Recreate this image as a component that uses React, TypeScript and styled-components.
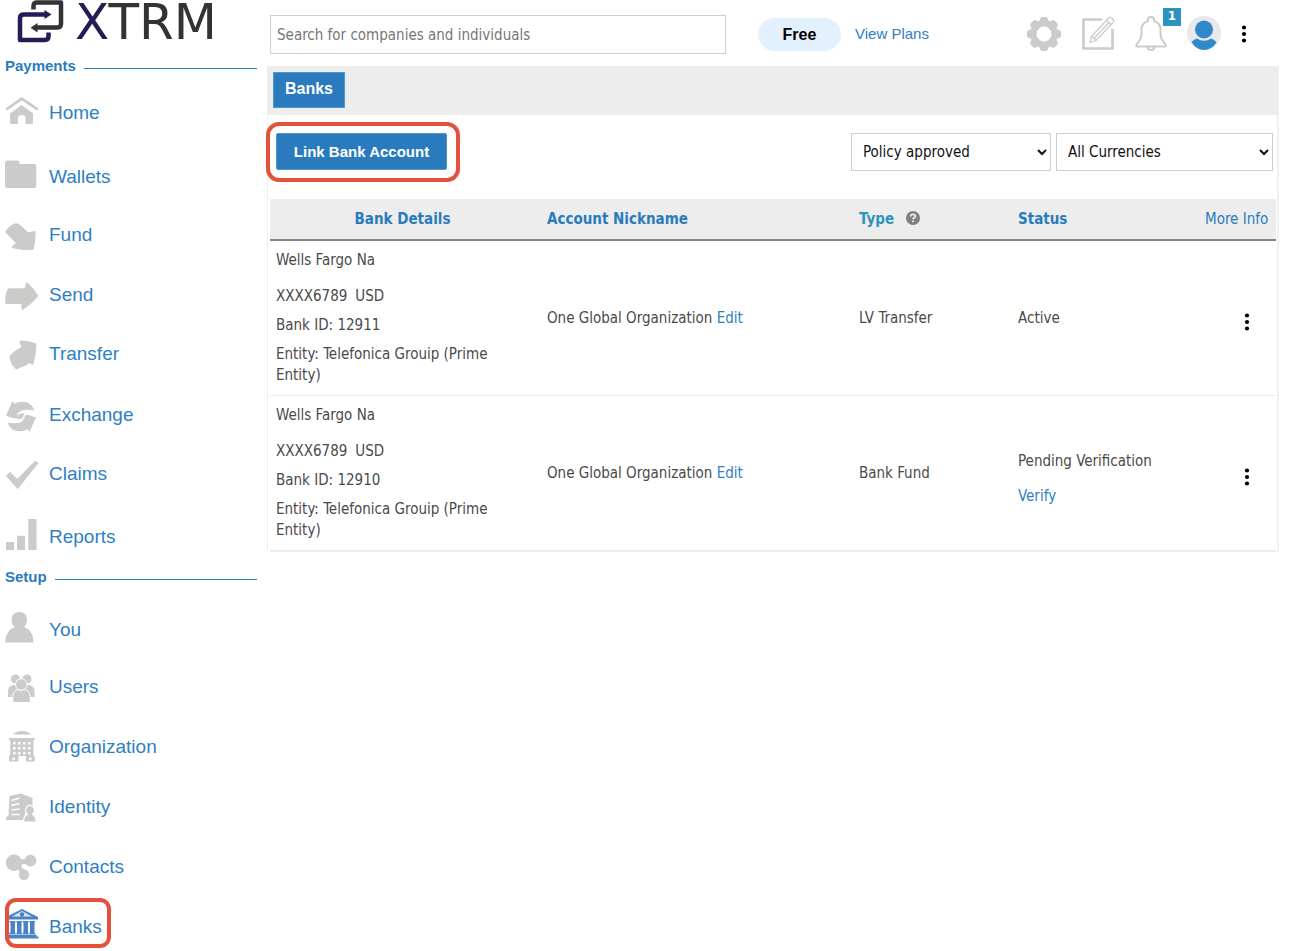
import React from "react";
import styled, { createGlobalStyle } from "styled-components";

const blue = "#2a7bbd";
const grey = "#cbcbca";
const sans = `"Liberation Sans", Arial, sans-serif`;
const humanist = `"DejaVu Sans Condensed", Tahoma, sans-serif`;

const GlobalStyle = createGlobalStyle`
  *, *::before, *::after { box-sizing: border-box; }
  body { margin: 0; background: #fff; color: #4a4a4a; font-family: ${humanist}; font-size: 15px; line-height: 21px; }
  a { color: #2f80c3; text-decoration: none; }
  button, input, select { font: inherit; }
`;

const Page = styled.div`
  display: grid;
  grid-template-columns: 257px minmax(0, 1fr);
  column-gap: 10px;
  padding-right: 12px;
`;

const Sidebar = styled.aside`
  font-family: ${sans};
`;

const Logo = styled.svg`
  display: block;
  width: 230px;
  height: 50px;
  overflow: visible;
`;

const SectionTitle = styled.h2<{ $before: number; $after: number }>`
  display: flex;
  align-items: center;
  gap: 8px;
  margin: ${(p) => p.$before}px 0 ${(p) => p.$after}px;
  padding-left: 5px;
  color: ${blue};
  font-size: 15px;
  line-height: 20px;

  &::after {
    content: "";
    flex: 1;
    height: 1px;
    margin-top: 4px;
    background: ${blue};
  }
`;

const NavList = styled.ul`
  margin: 0;
  padding: 0;
  list-style: none;
`;

const NavItem = styled.li<{ $gap: number; $marked?: boolean }>`
  position: relative;
  width: max-content;
  margin-bottom: ${(p) => p.$gap}px;

  ${(p) =>
    p.$marked &&
    `&::after {
      content: "";
      position: absolute;
      inset: -9px -9px -1px 5px;
      border: 4px solid #e5503c;
      border-radius: 11px;
      pointer-events: none;
    }`}
`;

const NavLink = styled.a`
  display: flex;
  align-items: center;
  gap: 9px;
  height: 40px;
  font-size: 19px;
  line-height: 22px;
`;

const NavIcon = styled.svg`
  width: 40px;
  height: 40px;
  fill: ${grey};
`;

const Main = styled.main`
  min-width: 0;
`;

const TopBar = styled.header`
  display: flex;
  align-items: center;
  height: 66px;
  padding: 0 31px 0 3px;
`;

const Search = styled.input`
  flex: 0 1 456px;
  min-width: 0;
  height: 39px;
  margin: 3px 32px 0 0;
  padding: 0 6px;
  border: 1px solid #cfcfcf;
  color: #555;

  &::placeholder { color: #777; opacity: 1; }
`;

const Plan = styled.span`
  width: 83px;
  margin: 2px 14px 0 0;
  border-radius: 17px;
  background: #e3f0fe;
  color: #000;
  font: bold 16px/33px ${sans};
  text-align: center;
`;

const PlansLink = styled.a`
  margin-top: 2px;
  font: 15px/20px ${sans};
  white-space: nowrap;
`;

const Actions = styled.div`
  display: flex;
  align-items: center;
  gap: 18px;
  margin: 2px 0 0 auto;
`;

const IconButton = styled.button`
  position: relative;
  display: block;
  padding: 0;
  border: 0;
  background: none;
  cursor: pointer;

  svg { display: block; }
`;

const Badge = styled.span`
  position: absolute;
  top: -8px;
  right: -13px;
  width: 18px;
  height: 18px;
  background: #2b95bf;
  color: #fff;
  font: bold 12px/17px "DejaVu Sans", sans-serif;
  text-align: center;
`;

const TabBar = styled.nav`
  display: flex;
  height: 49px;
  padding: 6px;
  background: #ededed;
`;

const Tab = styled.a`
  width: 72px;
  height: 36px;
  border: 1px solid #4f97cf;
  background: ${blue};
  color: #fff;
  font: bold 16px/31px ${sans};
  text-align: center;
`;

const Panel = styled.section`
  padding: 7px 1px 0 2px;
  border: solid #f0f0f0;
  border-width: 0 2px 0 1px;
`;

const Toolbar = styled.div`
  display: flex;
  align-items: center;
  gap: 5px;
  height: 60px;
  margin-bottom: 17px;
  padding-right: 3px;
`;

const Highlight = styled.div`
  margin: 0 auto 0 -4px;
  padding: 7px 9px 8px 6px;
  border: 4px solid #e5503c;
  border-radius: 13px;
`;

const PrimaryButton = styled.button`
  display: block;
  width: 171px;
  height: 37px;
  padding: 0;
  border: 1px solid #4f97cf;
  border-radius: 2px;
  background: ${blue};
  color: #fff;
  font: bold 15px/35px ${sans};
  cursor: pointer;
`;

const Filter = styled.select<{ $width: number }>`
  flex: 0 1 ${(p) => p.$width}px;
  min-width: 0;
  height: 38px;
  padding: 0 4px 0 7px;
  border: 1px solid #cfcfcf;
  border-radius: 0;
  background: #fff;
  color: #111;
`;

const Table = styled.table`
  width: 100%;
  border-collapse: collapse;
  table-layout: fixed;
  text-align: left;
`;

const Column = styled.col<{ $width?: number }>`
  ${(p) => p.$width && `width: ${p.$width}px;`}
`;

const HeadCell = styled.th<{ $center?: boolean; $light?: boolean; $teal?: boolean }>`
  height: 41px;
  padding: 0 12px 0 6px;
  border-bottom: 2px solid #858585;
  background: #ededed;
  color: ${(p) => (p.$teal ? "#2b95bf" : blue)};
  font-weight: ${(p) => (p.$light ? 400 : 700)};
  text-align: ${(p) => (p.$center ? "center" : "left")};
  white-space: nowrap;
  ${(p) => p.$light && "padding-right: 0;"}
`;

const HelpButton = styled(IconButton)`
  display: inline-block;
  margin-left: 12px;
  vertical-align: -1px;
`;

const Row = styled.tr`
  border-bottom: 1px solid #ececec;
  &:last-child { border-bottom-width: 2px; }
`;

const Cell = styled.td`
  padding: 9px 12px 9px 6px;
  vertical-align: middle;
`;

const Details = styled.div`
  display: grid;
  row-gap: 8px;
`;

const BankName = styled.div`
  margin-bottom: 7px;
`;

const Account = styled.div`
  display: flex;
  gap: 8px;
`;

const StatusStack = styled.div`
  display: grid;
  row-gap: 14px;
  padding-top: 12px;
`;

const RowMenu = styled(IconButton)`
  margin: 8px 0 0 38px;
`;

const Kebab = () => (
  <svg width="8" height="20" viewBox="0 0 8 20" fill="#000" aria-hidden="true">
    <circle cx="4" cy="3.500" r="2.100" />
    <circle cx="4" cy="10" r="2.100" />
    <circle cx="4" cy="16.500" r="2.100" />
  </svg>
);

const round = { stroke: grey, strokeWidth: 2.4, strokeLinejoin: "round" as const };

const turnArrow = "M12.500 6 6 20.500C10 22.500 15 24 20 23.500L17.500 19C21 14 29 14.500 34 15.500 33 7 21 4.500 14.500 9Z";

const icons: Record<string, React.ReactNode> = {
  Home: (
    <>
      <path d="M7 15.800 21.700 5.600 36.800 15.800" fill="none" stroke={grey} strokeWidth="2.800" strokeLinecap="round" />
      <path d="M21.700 12 33 20.500V29.500Q33 31 31.500 31H25.500V25Q25.500 22 21.800 22T18 25V31H11.500Q10 31 10 29.500V20.500Z" />
    </>
  ),
  Wallets: <path d="M7 3.500H17.500Q19.500 3.500 19.500 5.500V7H34Q36.300 7 36.300 9V29Q36.300 31 34 31H7Q5 31 5 29V5.500Q5 3.500 7 3.500Z" />,
  Fund: <path {...round} d="M6.500 16.700Q10 11.500 16 9.500 18 9.500 19.500 11L28 18.800Q31 18.500 34.400 17.200 34.500 26 32.500 33.800 22 34 13 32L17.500 28.500Z" />,
  Send: <path {...round} d="M9 14.500 25.500 14.200 27 8.800Q33 14 37 21 30 29 22.800 33.600L22.500 27.800H6.300Q6.500 17 9 14.500Z" />,
  Transfer: <path {...round} d="M10.700 22.500Q15 17.500 23 13.500L20.500 7.800Q29 8 35.300 10.300 35 20 32.400 29.500L30 27.500Q23.500 32 16.500 34 11.500 29.500 10.700 22.500Z" />,
  Exchange: (
    <>
      <path d={turnArrow} />
      <path transform="rotate(180 21 21.500)" d={turnArrow} />
      <path d="M18.500 18.500Q22 17.500 26 19L23.500 24.500Q20 25.500 16 24L18.500 24Z" fill={grey} />
      <path d="M17.500 19Q21 16.500 26 17.500L24 21.500Q23.500 24.500 17 25.500" fill="none" stroke="#fff" strokeWidth="1.500" />
    </>
  ),
  Claims: <path d="M6 22 10 17.700 17.300 25 35 6.700 38.700 8.700 17.700 35Z" />,
  Reports: <path d="M6 25H14V33H6ZM17 18.700H25V33H17ZM28.300 2H36.500V33H28.300Z" />,
  You: <path d="M19.300 2C25 2 27.300 6 27 10.500 26.800 13.500 25.500 15.500 24 17 30.500 19 33.500 25 33.500 32.500H5.300C5.300 25 8.500 19 15 17 12.800 15.500 11.700 13 11.600 10.500 11.500 6 14 2 19.300 2Z" />,
  Users: (
    <g stroke="#fff" strokeWidth="1">
      <circle cx="15.500" cy="12" r="5" />
      <circle cx="27" cy="12" r="5" />
      <path d="M7.500 30.500V24Q8 18 14 17.500H28.500Q34.500 18 35 24V30.500Z" />
      <circle cx="21.300" cy="17.500" r="5.800" />
      <path d="M12.800 35.500V29.500Q13.500 23 18 22.500 21 24.500 24.500 22.500 29.500 23 30.200 29.500V35.500Z" />
    </g>
  ),
  Organization: (
    <>
      <path d="M16 5.500Q17 4 22 4T28 5.500Q31 6 30.500 7.500H13.500Q13 6 16 5.500ZM9 11H34.700V13H33.500V28.500H34.700V34.500H26V29H18.500V34.500H9V28.500H10.200V13H9Z" />
      <path fill="#fff" d="M13 15H15.500V17.500H13ZM18 15H20.500V17.500H18ZM23 15H25.500V17.500H23ZM28 15H30.500V17.500H28ZM13 20H15.500V22.500H13ZM18 20H20.500V22.500H18ZM23 20H25.500V22.500H23ZM28 20H30.500V22.500H28ZM13 25H15.500V27.500H13ZM18 25H20.500V27.500H18ZM23 25H25.500V27.500H23ZM28 25H30.500V27.500H28ZM12.500 30.500H15V33H12.500ZM29 30.500H31.500V33H29Z" />
    </>
  ),
  Identity: (
    <>
      <path d="M9.500 9 20.500 6.500 32.500 11V20H27L24 30 22.500 33H6V30.500L8.500 28.500Z" />
      <path d="M11.500 13.500 19.500 11M11.500 18.500 19.500 16.500M11.500 23 19.500 22M11.500 27.500H19.500" stroke="#fff" strokeWidth="1.500" />
      <path stroke="#fff" strokeWidth="1.200" d="M23.500 35Q23.500 29 27.500 27.500 25 25 25.500 22.500 26.500 18.300 30 18.300T34.500 22.500Q35 25 32.500 27.500 36.200 29 36.200 35Z" />
    </>
  ),
  Contacts: (
    <>
      <circle cx="14" cy="15.700" r="8.200" />
      <circle cx="30.500" cy="13.700" r="5.900" />
      <circle cx="24" cy="27.700" r="5.200" />
      <path d="M18 12 29 12.500 30 16.500 20 17.500ZM16 19 19 17 25 24 21 27Z" />
    </>
  ),
  Banks: (
    <g fill="#4a82c6">
      <path d="M22 2 38 10V12.500H6V10Z" />
      <path fill="#dce8f5" d="M22 4 32 9.500H12Z" />
      <circle cx="22" cy="7.500" r="2.300" />
      <path d="M9.500 14H15.500V15.500H15V25.500H15.500V27H9.500V25.500H10.500V15.500H9.500ZM16.500 14H22V15.500H21.500V25.500H22V27H16.500V25.500H17V15.500H16.500ZM23 14H28.500V15.500H28V25.500H28.500V27H23V25.500H23.500V15.500H23ZM29.500 14H35V15.500H34.500V25.500H35V27H29.500V25.500H30V15.500H29.500ZM8.500 27.500H36.500V29.500H38.500V31.500H6V29.500H8.500Z" />
    </g>
  ),
};

type Entry = { label: string; gap: number; marked?: boolean };

const payments: Entry[] = [
  { label: "Home", gap: 24 },
  { label: "Wallets", gap: 18 },
  { label: "Fund", gap: 20 },
  { label: "Send", gap: 19 },
  { label: "Transfer", gap: 21 },
  { label: "Exchange", gap: 19 },
  { label: "Claims", gap: 23 },
  { label: "Reports", gap: 0 },
];

const setup: Entry[] = [
  { label: "You", gap: 17 },
  { label: "Users", gap: 20 },
  { label: "Organization", gap: 20 },
  { label: "Identity", gap: 20 },
  { label: "Contacts", gap: 20 },
  { label: "Banks", gap: 2, marked: true },
];

const Nav = ({ entries }: { entries: Entry[] }) => (
  <NavList>
    {entries.map(({ label, gap, marked }) => (
      <NavItem key={label} $gap={gap} $marked={marked}>
        <NavLink href="#">
          <NavIcon viewBox="0 0 40 40" aria-hidden="true">{icons[label]}</NavIcon>
          {label}
        </NavLink>
      </NavItem>
    ))}
  </NavList>
);

const banks = [
  { id: "12911", type: "LV Transfer", status: "Active", verify: false },
  { id: "12910", type: "Bank Fund", status: "Pending Verification", verify: true },
];

const gearTeeth = [0, 45, 90, 135, 180, 225, 270, 315];

export default function App() {
  return (
    <>
      <GlobalStyle />
      <Page>
        <Sidebar>
          <Logo viewBox="0 0 230 50" role="img" aria-label="XTRM">
            <g fill="none" strokeWidth="4.500" strokeLinejoin="round">
              <path d="M33.500 9.500V6Q33.500 2.500 37 2.500H61V23.500Q61 27.500 57.500 27.500H36" stroke="#333336" />
              <path d="M46 14.500H24Q20 14.500 20 18V40H45Q48.500 40 48.500 36V32.500" stroke="#251b55" />
            </g>
            <path d="M44.500 10 51.500 14.500 44.500 19Z" fill="#251b55" />
            <path d="M37.500 23 30.500 27.700 37.500 32.500Z" fill="#333336" />
            <text x="75" y="39" fontFamily="DejaVu Sans, sans-serif" fontSize="50" fill="#333336">
              <tspan fill="#251b55">X</tspan>TRM
            </text>
          </Logo>
          <SectionTitle $before={6} $after={17}>Payments</SectionTitle>
          <Nav entries={payments} />
          <SectionTitle $before={10} $after={23}>Setup</SectionTitle>
          <Nav entries={setup} />
        </Sidebar>

        <Main>
          <TopBar>
            <Search type="search" aria-label="Search" placeholder="Search for companies and individuals" />
            <Plan>Free</Plan>
            <PlansLink href="#">View Plans</PlansLink>
            <Actions>
              <IconButton aria-label="Settings">
                <svg width="36" height="36" viewBox="-18 -18 36 36">
                  {gearTeeth.map((angle) => (
                    <path key={angle} transform={`rotate(${angle})`} d="M-5.500 -11 -4.200 -14.500Q-3.500 -17 -2 -17H2Q3.500 -17 4.200 -14.500L5.500 -11Z" fill={grey} />
                  ))}
                  <circle r="10.500" fill="none" stroke={grey} strokeWidth="6" />
                </svg>
              </IconButton>
              <IconButton aria-label="Compose">
                <svg width="36" height="36" viewBox="0 0 36 36" fill="none" stroke={grey}>
                  <path d="M22 3.500H3.500V32.500H32.500V13" strokeWidth="2.600" />
                  <path d="M11.500 20.500 28.500 2Q30.500 0.500 32.500 2.500T33 6.500L16 24.500 10 26.500ZM26.500 4.500 31 8.800M12 20.500 16 24M14 22.500 29.500 6" strokeWidth="1.300" />
                </svg>
              </IconButton>
              <IconButton aria-label="Notifications, 1 new">
                <svg width="34" height="36" viewBox="0 0 34 36" fill="none" stroke={grey} strokeWidth="2" strokeLinejoin="round">
                  <path d="M14 5V3.500Q14 1 17 1T20 3.500V5Q26 7 26.500 13V18Q26.500 23 31.500 28.500V30.500H2.500V28.500Q7.500 23 7.500 18V13Q8 7 14 5ZM13.500 31Q14 34 17 34T20.500 31" />
                </svg>
                <Badge>1</Badge>
              </IconButton>
              <IconButton aria-label="Profile">
                <svg width="36" height="36" viewBox="0 0 36 36">
                  <circle cx="18" cy="17" r="17" fill="#e9e9e9" />
                  <circle cx="18" cy="13.500" r="9" fill="#3089cb" />
                  <path d="M5.500 26Q8 23 11 22.500 18 27 25 22.500 28.500 23.500 30.500 26.500 25.500 34 18 34T5.500 26Z" fill="#3089cb" />
                </svg>
              </IconButton>
              <IconButton aria-label="More options"><Kebab /></IconButton>
            </Actions>
          </TopBar>

          <TabBar aria-label="Sections">
            <Tab href="#">Banks</Tab>
          </TabBar>

          <Panel>
            <Toolbar>
              <Highlight>
                <PrimaryButton>Link Bank Account</PrimaryButton>
              </Highlight>
              <Filter $width={200} aria-label="Policy status">
                <option>Policy approved</option>
              </Filter>
              <Filter $width={217} aria-label="Currency">
                <option>All Currencies</option>
              </Filter>
            </Toolbar>

            <Table>
              <colgroup>
                <Column $width={271} />
                <Column />
                <Column $width={159} />
                <Column $width={187} />
                <Column $width={77} />
              </colgroup>
              <thead>
                <tr>
                  <HeadCell scope="col" $center>Bank Details</HeadCell>
                  <HeadCell scope="col">Account Nickname</HeadCell>
                  <HeadCell scope="col" $teal>
                    Type
                    <HelpButton aria-label="About types">
                      <svg width="14" height="14" viewBox="0 0 14 14">
                        <circle cx="7" cy="7" r="7" fill="#808080" />
                        <path d="M4.700 5.500Q4.700 3.300 7 3.300T9.300 5.200Q9.300 6.300 8 6.900 7 7.400 7 8.300M7 9.500V11.200" fill="none" stroke="#ededed" strokeWidth="1.800" />
                      </svg>
                    </HelpButton>
                  </HeadCell>
                  <HeadCell scope="col">Status</HeadCell>
                  <HeadCell scope="col" $light>More Info</HeadCell>
                </tr>
              </thead>
              <tbody>
                {banks.map((bank) => (
                  <Row key={bank.id}>
                    <Cell>
                      <Details>
                        <BankName>Wells Fargo Na</BankName>
                        <Account><span>XXXX6789</span><span>USD</span></Account>
                        <div>Bank ID: {bank.id}</div>
                        <div>Entity: Telefonica Grouip (Prime Entity)</div>
                      </Details>
                    </Cell>
                    <Cell>One Global Organization <a href="#">Edit</a></Cell>
                    <Cell>{bank.type}</Cell>
                    <Cell>
                      {bank.verify ? (
                        <StatusStack>
                          <span>{bank.status}</span>
                          <a href="#">Verify</a>
                        </StatusStack>
                      ) : (
                        bank.status
                      )}
                    </Cell>
                    <Cell>
                      <RowMenu aria-label={`Actions for bank ${bank.id}`}><Kebab /></RowMenu>
                    </Cell>
                  </Row>
                ))}
              </tbody>
            </Table>
          </Panel>
        </Main>
      </Page>
    </>
  );
}
